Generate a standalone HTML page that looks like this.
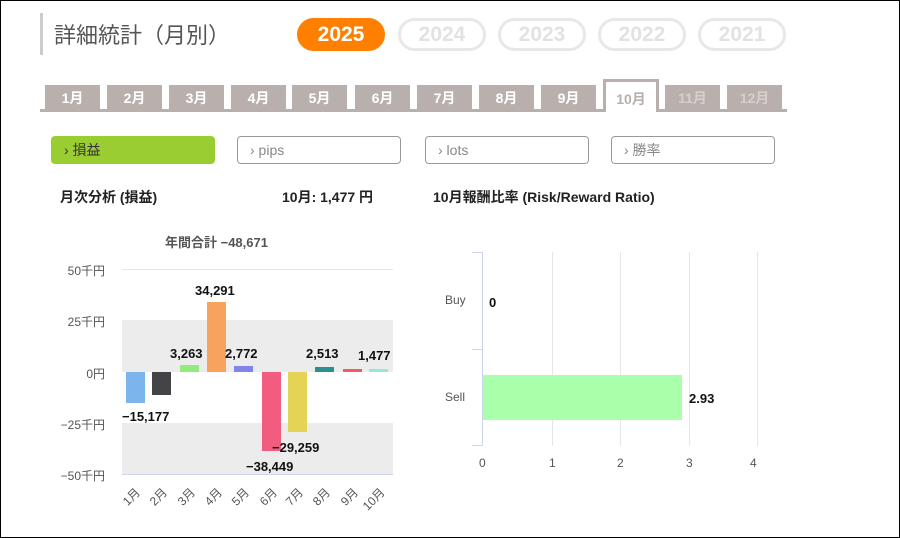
<!DOCTYPE html>
<html><head><meta charset="utf-8"><style>
*{margin:0;padding:0;box-sizing:border-box}
body{width:900px;height:538px;position:relative;background:#fff;font-family:"Liberation Sans","Noto Sans CJK JP",sans-serif;overflow:hidden}
.frame{position:absolute;left:0;top:0;width:900px;height:538px;border:1px solid #000}
.a{position:absolute}
.pill{position:absolute;top:18px;width:88px;height:33px;border-radius:17px;border:3px solid #e8e8e8;color:#e2e2e2;font-weight:bold;font-size:21px;text-align:center;line-height:27px}
.tab{position:absolute;top:85px;width:55px;height:25px;background:#b9b0ae;color:#fff;font-weight:bold;font-size:14px;text-align:center;line-height:27px}
.btn{position:absolute;top:136px;width:164px;height:28px;border:1px solid #999;border-radius:4px;color:#888;font-size:14px;line-height:26px;padding-left:12px}
.yl{position:absolute;font-size:12px;color:#555;text-align:right;width:50px;left:55px}
.v{position:absolute;font-size:13px;font-weight:bold;color:#111;white-space:nowrap}
.xl{position:absolute;top:484px;font-size:12px;color:#555;transform:rotate(-45deg);transform-origin:right top}
</style></head><body>
<div class="frame"></div>
<div class="a" style="left:40px;top:13px;width:3px;height:42px;background:#ccc"></div>
<div class="a" style="left:54px;top:18px;font-size:22px;color:#555">詳細統計（月別）</div>
<div class="pill" style="left:297px;background:#ff8000;border-color:#ff8000;color:#fff">2025</div>
<div class="pill" style="left:398px">2024</div>
<div class="pill" style="left:498px">2023</div>
<div class="pill" style="left:598px">2022</div>
<div class="pill" style="left:698px">2021</div>
<div class="a" style="left:40px;top:109px;width:747px;height:3px;background:#b9b0ae"></div>
<div class="tab" style="left:45px">1月</div>
<div class="tab" style="left:107px">2月</div>
<div class="tab" style="left:169px">3月</div>
<div class="tab" style="left:231px">4月</div>
<div class="tab" style="left:292px">5月</div>
<div class="tab" style="left:355px">6月</div>
<div class="tab" style="left:417px">7月</div>
<div class="tab" style="left:479px">8月</div>
<div class="tab" style="left:541px">9月</div>
<div class="a" style="left:603px;top:79px;width:56px;height:33px;background:#fff;border:3px solid #b9b0ae;border-bottom:none;color:#b9b0ae;font-weight:bold;font-size:14px;text-align:center;line-height:34px">10月</div>
<div class="tab" style="left:665px;color:#d6cfcd">11月</div>
<div class="tab" style="left:727px;color:#d6cfcd">12月</div>
<div class="btn" style="left:51px;background:#9acd32;border-color:#9acd32;color:#333">› 損益</div>
<div class="btn" style="left:237px">› pips</div>
<div class="btn" style="left:425px">› lots</div>
<div class="btn" style="left:611px">› 勝率</div>
<div class="a" style="left:60px;top:187px;font-size:14px;font-weight:bold;color:#222">月次分析 (損益)</div>
<div class="a" style="left:282px;top:187px;font-size:14px;font-weight:bold;color:#222">10月:&nbsp;1,477 円</div>
<div class="a" style="left:433px;top:187px;font-size:14px;font-weight:bold;color:#222">10月報酬比率 (Risk/Reward Ratio)</div>
<div class="a" style="left:165px;top:232px;font-size:13px;font-weight:bold;color:#555">年間合計 −48,671</div>
<div class="a" style="left:122px;top:269px;width:271px;height:1px;background:#e4e6ee"></div>
<div class="a" style="left:122px;top:320px;width:271px;height:52px;background:#ececec"></div>
<div class="a" style="left:122px;top:423px;width:271px;height:52px;background:#ececec"></div>
<div class="a" style="left:122px;top:474px;width:271px;height:1px;background:#ccd6eb"></div>
<div class="yl" style="top:262px">50千円</div>
<div class="yl" style="top:313px">25千円</div>
<div class="yl" style="top:365px">0円</div>
<div class="yl" style="top:416px">−25千円</div>
<div class="yl" style="top:467px">−50千円</div>
<div class="a" style="left:126px;top:372px;width:19px;height:31px;background:#7cb5ec"></div>
<div class="a" style="left:152px;top:372px;width:19px;height:23px;background:#434348"></div>
<div class="a" style="left:180px;top:365px;width:19px;height:7px;background:#90ed7d"></div>
<div class="a" style="left:207px;top:302px;width:19px;height:70px;background:#f7a35c"></div>
<div class="a" style="left:234px;top:366px;width:19px;height:6px;background:#8085e9"></div>
<div class="a" style="left:262px;top:372px;width:19px;height:79px;background:#f15c80"></div>
<div class="a" style="left:288px;top:372px;width:19px;height:60px;background:#e4d354"></div>
<div class="a" style="left:315px;top:367px;width:19px;height:5px;background:#2b908f"></div>
<div class="a" style="left:343px;top:369px;width:19px;height:3px;background:#f45b5b"></div>
<div class="a" style="left:369px;top:369px;width:19px;height:3px;background:#91e8e1"></div>
<div class="v" style="left:122px;top:409px">−15,177</div>
<div class="v" style="left:170px;top:346px">3,263</div>
<div class="v" style="left:195px;top:283px">34,291</div>
<div class="v" style="left:225px;top:346px">2,772</div>
<div class="v" style="left:246px;top:459px">−38,449</div>
<div class="v" style="left:272px;top:440px">−29,259</div>
<div class="v" style="left:306px;top:346px">2,513</div>
<div class="v" style="left:358px;top:348px">1,477</div>
<div class="xl" style="left:113px">1月</div>
<div class="xl" style="left:140px">2月</div>
<div class="xl" style="left:168px">3月</div>
<div class="xl" style="left:195px">4月</div>
<div class="xl" style="left:222px">5月</div>
<div class="xl" style="left:250px">6月</div>
<div class="xl" style="left:276px">7月</div>
<div class="xl" style="left:303px">8月</div>
<div class="xl" style="left:331px">9月</div>
<div class="xl" style="left:351px">10月</div>
<div class="a" style="left:552px;top:252px;width:1px;height:194px;background:#e6e6e6"></div>
<div class="a" style="left:620px;top:252px;width:1px;height:194px;background:#e6e6e6"></div>
<div class="a" style="left:689px;top:252px;width:1px;height:194px;background:#e6e6e6"></div>
<div class="a" style="left:757px;top:252px;width:1px;height:194px;background:#e6e6e6"></div>
<div class="a" style="left:482px;top:252px;width:1px;height:194px;background:#ccd6eb"></div>
<div class="a" style="left:472px;top:252px;width:10px;height:1px;background:#ccd6eb"></div>
<div class="a" style="left:472px;top:349px;width:10px;height:1px;background:#ccd6eb"></div>
<div class="a" style="left:472px;top:445px;width:10px;height:1px;background:#ccd6eb"></div>
<div class="a" style="left:483px;top:375px;width:199px;height:45px;background:#aaffaa"></div>
<div class="a" style="left:445px;top:293px;font-size:12px;color:#555">Buy</div>
<div class="a" style="left:445px;top:390px;font-size:12px;color:#555">Sell</div>
<div class="v" style="left:489px;top:295px">0</div>
<div class="v" style="left:689px;top:391px">2.93</div>
<div class="a" style="left:479px;top:456px;font-size:12px;color:#555">0</div>
<div class="a" style="left:549px;top:456px;font-size:12px;color:#555">1</div>
<div class="a" style="left:617px;top:456px;font-size:12px;color:#555">2</div>
<div class="a" style="left:686px;top:456px;font-size:12px;color:#555">3</div>
<div class="a" style="left:750px;top:456px;font-size:12px;color:#555">4</div>
</body></html>
